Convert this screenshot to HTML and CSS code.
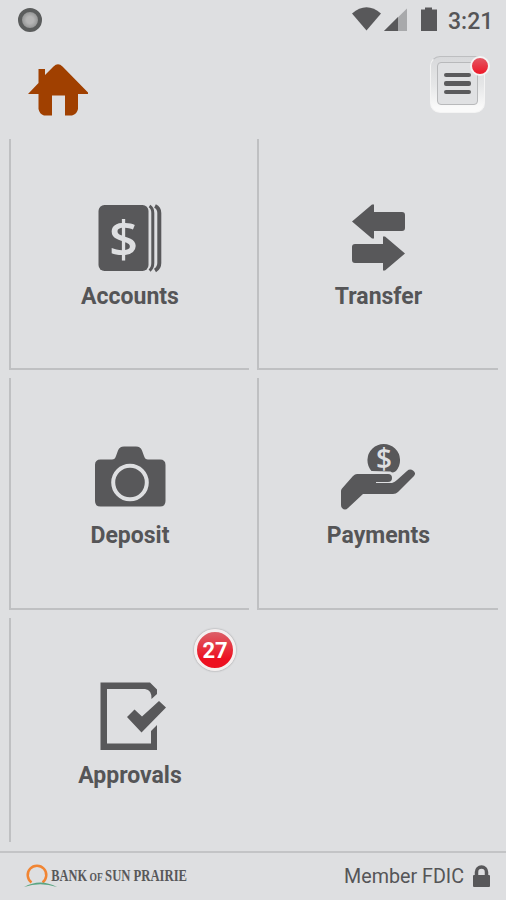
FILE: index.html
```html
<!DOCTYPE html>
<html lang="en">
<head>
  <meta charset="UTF-8" />
  <meta name="viewport" content="width=device-width, initial-scale=1.0"/>
  <title>Bank of Sun Prairie</title>
  <link rel="stylesheet" href="styles.css">
</head>
<body>

  <div class="status-bar">
    <span class="recording"></span>
    <svg class="status-icons" width="90" height="28" viewBox="0 0 90 28">
      <path d="M3 8.500Q17.500 -4 32 8.500L17.500 25.500Z"/>
      <path d="M35 26L58 3.500V26Z" opacity=".4"/>
      <path d="M35 26L49 12V26Z"/>
      <path d="M72 4.500H76V2.500H83V4.500H88V26H72Z"/>
    </svg>
    <span class="time">3:21</span>
  </div>

  <header>
    <a href="#" class="home" aria-label="Home">
      <svg width="60" height="54" viewBox="0 0 60 54">
        <path d="M0 30L10.500 19V5H17V11L25.500 2.500Q30 -2 34.500 2.500L60 28.500V30H50V45Q49 50 44 51.500H37V31.500H24V51.500H16Q11.500 50 10.500 45V30Z"/>
      </svg>
    </a>
    <button type="button" class="menu" aria-label="Menu">
      <span class="menu-inner">
        <span class="line"></span>
        <span class="line"></span>
        <span class="line"></span>
      </span>
      <span class="dot"></span>
    </button>
  </header>

  <main>
    <a href="#" class="tile">
      <svg class="icon" width="81" height="72" viewBox="0 0 81 72">
        <rect x="8.500" y="4" width="50" height="66" rx="6"/>
        <path class="page" d="M59.500 5Q62.800 7 62.800 12V62Q62.800 67 59.500 69.500"/>
        <path class="page wide" d="M65 5Q69.300 7 69.300 12V62Q69.300 67 65 69.500"/>
        <text class="dollar" x="33.500" y="55.500" font-size="51">$</text>
      </svg>
      <span class="label">Accounts</span>
    </a>

    <a href="#" class="tile">
      <svg class="icon" width="81" height="72" viewBox="0 0 81 72">
        <path d="M14 20.500L34 3.500H36V11H64Q67 11 67 14V27Q67 30 64 30H36V37.500H34Z"/>
        <path d="M67 52.500L47 69.500H45V62H17Q14 62 14 59V46Q14 43 17 43H45V35.500H47Z"/>
      </svg>
      <span class="label">Transfer</span>
    </a>

    <a href="#" class="tile">
      <svg class="icon" width="81" height="72" viewBox="0 0 81 72">
        <path d="M5 25Q5 19.500 10.500 19.500H22Q25 19.500 26 16L28 10.500Q29.500 6.500 34 6.500H46Q50.500 6.500 52 10.500L54 16Q55 19.500 58 19.500H70Q75.500 19.500 75.500 25V61Q75.500 66.500 70 66.500H10.500Q5 66.500 5 61Z"/>
        <circle class="lens" cx="40" cy="42.500" r="16.800"/>
      </svg>
      <span class="label">Deposit</span>
    </a>

    <a href="#" class="tile">
      <svg class="icon" width="81" height="72" viewBox="0 0 81 72">
        <path d="M33.500 31A16.300 16.300 0 1 1 58 31Q55 33.500 52.500 31.500Z"/>
        <text class="dollar" x="46" y="28.500" font-size="28">$</text>
        <path d="M19 34H50Q54 34 54 38T50 42H38V43H54Q57 42 59 40L69 31Q72 28.500 75 30.500Q78.500 33 76 36L60 52Q58 54 55 54H25L10 68Q7 71 4 68Q3 67 3 65V51Q3 49.500 4 48.500L15 36Q17 34 19 34Z"/>
      </svg>
      <span class="label">Payments</span>
    </a>

    <a href="#" class="tile last">
      <span class="badge">27</span>
      <svg class="icon" width="81" height="72" viewBox="0 0 81 72">
        <path d="M10.500 2.500H60L67 9.500V14L61.500 19Q62 10 55 9H17V63.500H61V51L67 45V70H10.500Z"/>
        <path d="M37 37L44.500 29.500L52 36.500L69 21L76 27.500L51.500 52.500Z"/>
      </svg>
      <span class="label">Approvals</span>
    </a>
  </main>

  <footer>
    <svg class="logo" width="168" height="28" viewBox="0 0 168 28">
      <path class="sun" d="M7.500 19.500A9.300 9.300 0 1 1 18.500 19.500"/>
      <path class="hill" d="M0 24Q16 15 33 24Q16 18.500 0 24Z"/>
      <g transform="scale(.78 1)">
        <text x="35" y="18.500" font-size="16" textLength="46" lengthAdjust="spacingAndGlyphs">BANK</text>
        <text x="84" y="18.500" font-size="12" textLength="17" lengthAdjust="spacingAndGlyphs">OF</text>
        <text x="104" y="18.500" font-size="16" textLength="105" lengthAdjust="spacingAndGlyphs">SUN PRAIRIE</text>
      </g>
    </svg>
    <span class="member">Member FDIC</span>
    <svg class="lock" width="17" height="23" viewBox="0 0 17 23">
      <path d="M3.500 11V7A5 5 0 0 1 13.500 7V11"/>
      <rect x="0" y="10" width="17" height="12" rx="1"/>
    </svg>
  </footer>

</body>
</html>
```

FILE: styles.css
```css
* {
  box-sizing: border-box;
}

body {
  margin: 0;
  height: 900px;
  background: #dedfe1;
  color: #555557;
  font-family: Roboto, sans-serif;
  display: flex;
  flex-direction: column;
  overflow: hidden;
}

a {
  color: inherit;
  text-decoration: none;
}

svg {
  display: block;
  fill: #58585a;
}

.status-bar {
  height: 42px;
  padding: 0 14px 2px 18px;
  display: flex;
  align-items: center;
}

.recording {
  width: 24px;
  height: 24px;
  border: 4px solid #5b5d5d;
  border-radius: 50%;
  background: radial-gradient(#b5b5b5 30%, #929393 75%);
}

.status-icons {
  margin-left: auto;
  margin-top: -2px;
}

.time {
  width: 44px;
  margin: 2px 0 0 9px;
  font-size: 23px;
  font-weight: 500;
  white-space: nowrap;
}

header {
  height: 97px;
  padding: 14px 21px 0 28px;
  display: flex;
  justify-content: space-between;
  align-items: flex-start;
}

.home {
  margin-top: 8px;
}

.home svg {
  fill: #a04000;
}

/* menu button */
.menu {
  position: relative;
  width: 55px;
  height: 57px;
  padding: 5px 6px 7px;
  border: 1px solid #f4f4f4;
  border-top-color: #bdbec0;
  border-radius: 10px;
  background: linear-gradient(#d8d9db, #e5e6e7 50%, #fafafa 92%);
}

.menu-inner {
  height: 100%;
  border: 1px solid #b8b9bb;
  border-radius: 4px;
  background: #e0e1e3;
  display: flex;
  flex-direction: column;
  align-items: center;
  justify-content: center;
  gap: 4px;
}

.line {
  width: 27px;
  height: 4.5px;
  border-radius: 2px;
  background: #5b5b5d;
}

.dot {
  position: absolute;
  top: -1px;
  right: -6px;
  width: 20px;
  height: 20px;
  border: 2px solid #f4f4f4;
  border-radius: 50%;
  background: linear-gradient(#e35763, #ee1828);
}

/* tiles */
main {
  height: 703px;
  padding: 0 8px 0 9px;
  display: grid;
  grid-template-columns: 240px 241px;
  grid-template-rows: 231px 232px 224px;
  gap: 8px;
}

.tile {
  position: relative;
  padding-top: 62px;
  border-left: 2px solid #bfc0c2;
  border-bottom: 2px solid #bfc0c2;
  display: flex;
  flex-direction: column;
  align-items: center;
}

.tile.last {
  border-bottom: none;
}

.label {
  margin-top: 10px;
  font-size: 23px;
  line-height: 27px;
  font-weight: 700;
}

.page {
  fill: none;
  stroke: #58585a;
  stroke-width: 3;
}

.page.wide {
  stroke-width: 4;
}

.dollar {
  fill: #dedfe1;
  font-family: "Open Sans", sans-serif;
  font-weight: 600;
  text-anchor: middle;
}

.lens {
  fill: none;
  stroke: #dedfe1;
  stroke-width: 4;
}

.badge {
  position: absolute;
  top: 11px;
  right: 13px;
  width: 42px;
  height: 42px;
  border: 3px solid #f4efef;
  border-radius: 50%;
  background: linear-gradient(#dc6068, #ed1020 75%);
  box-shadow: 0 0 2px #8c8c8e;
  color: #fff;
  font-size: 22px;
  line-height: 37px;
  font-weight: 700;
  text-align: center;
}

footer {
  height: 49px;
  margin-top: 9px;
  padding: 0 16px 0 24px;
  border-top: 2px solid #c3c4c6;
  display: flex;
  align-items: center;
}

.logo text {
  font-family: "Liberation Serif", serif;
  font-weight: 700;
}

.sun {
  fill: none;
  stroke: #f18533;
  stroke-width: 2.5;
}

.hill {
  fill: #5aa583;
}

.member {
  margin-left: auto;
  font-size: 19.7px;
}

.lock {
  margin-left: 9px;
}

.lock path {
  fill: none;
  stroke: #58585a;
  stroke-width: 3.5;
}
```
